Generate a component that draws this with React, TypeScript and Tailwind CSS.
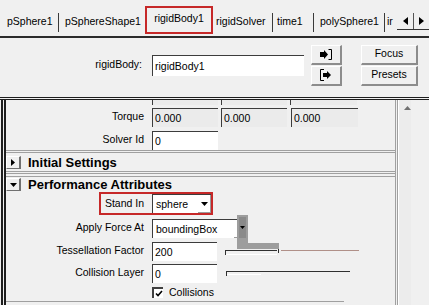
import React from "react";

const Sep = () => <div className="w-px h-[19px] mt-[13px] bg-[#3a3a3a]" />;

function Field({ w, value, gray }: { w: string; value: string; gray?: boolean }) {
  return (
    <div
      className={`${w} h-[19px] border-t border-l border-[#3c3c3c] ${
        gray ? "bg-[#ebebeb]" : "bg-white"
      } pl-[2px] leading-[18px] whitespace-nowrap overflow-hidden`}
    >
      {value}
    </div>
  );
}

function Select({ w, value }: { w: string; value: string }) {
  return (
    <div className={`${w} h-[19px] flex border-t border-l border-[#3c3c3c] bg-white`}>
      <span className="flex-1 pl-[3px] leading-[18px] whitespace-nowrap overflow-hidden">{value}</span>
      <div className="w-[13px] flex items-center justify-center border-b border-r border-[#9a9a9a]">
        <svg width="7" height="4">
          <path d="M0 0h7L3.5 4z" fill="#000" />
        </svg>
      </div>
    </div>
  );
}

function Row({ label, children, h }: { label: string; children: React.ReactNode; h: string }) {
  return (
    <div className={`flex items-center ${h}`}>
      <div className="w-[138px] text-right whitespace-nowrap">{label}</div>
      <div className="ml-[8px] flex items-center">{children}</div>
    </div>
  );
}

function Toggle({ open, label }: { open?: boolean; label: string }) {
  return (
    <div className="flex items-center h-full">
      <div className="w-[15px] h-[13px] flex items-center justify-center border-t border-l border-white border-r-2 border-b border-r-[#707070] border-b-[#707070]">
        {open ? (
          <svg width="7" height="4">
            <path d="M0 0h7L3.5 4z" fill="#000" />
          </svg>
        ) : (
          <svg width="4" height="7">
            <path d="M0 0l4 3.5L0 7z" fill="#000" />
          </svg>
        )}
      </div>
      <span className="ml-[7px] text-[13px] font-bold leading-[15px]">{label}</span>
    </div>
  );
}

const Btn = ({ children }: { children: React.ReactNode }) => (
  <div className="h-[20px] flex items-center justify-center bg-[#f0f0f0] border-t border-l border-white border-r-2 border-b-2 border-r-[#8c8c8c] border-b-[#8c8c8c]">
    {children}
  </div>
);

export default function App() {
  return (
    <div className="relative w-[429px] h-[305px] overflow-hidden bg-[#f0f0f0] text-[10.5px] text-black font-['Liberation_Sans',Arial,sans-serif]">
      {/* tabs */}
      <div className="flex h-[38px] border-b-2 border-[#2b2b2b]">
        <div className="w-[58px] pl-[7px] pt-[14px] leading-[15px]">pSphere1</div>
        <Sep />
        <div className="w-[86px] pl-[6px] pt-[14px] leading-[15px]">pSphereShape1</div>
        <div className="w-[68px] h-[28px] mt-[6px] border-2 border-[#c62828] flex justify-center pt-[3px] leading-[15px]">
          rigidBody1
        </div>
        <div className="w-[59px] pl-[3px] pt-[14px] leading-[15px]">rigidSolver</div>
        <Sep />
        <div className="w-[40px] pl-[4px] pt-[14px] leading-[15px]">time1</div>
        <Sep />
        <div className="w-[70px] pl-[6px] pt-[14px] leading-[15px]">polySphere1</div>
        <Sep />
        <div className="w-[12px] pl-[2px] pt-[14px] leading-[15px] overflow-hidden whitespace-nowrap">ir</div>
        <div className="w-[32px] h-[17px] mt-[13px] flex border-b border-[#333]">
          <div className="w-[16px] flex items-center justify-center">
            <svg width="5" height="8">
              <path d="M5 0v8L0 4z" fill="#000" />
            </svg>
          </div>
          <div className="w-[16px] flex items-center justify-center border-l border-[#555]">
            <svg width="5" height="8">
              <path d="M0 0v8l5-4z" fill="#000" />
            </svg>
          </div>
        </div>
      </div>

      {/* header */}
      <div className="flex items-center h-[59px] pb-[5px]">
        <div className="w-[142px] text-right">rigidBody:</div>
        <div className="ml-[10px] w-[152px] h-[21px] bg-white border-t border-l border-[#3c3c3c] pl-[2px] leading-[20px]">
          rigidBody1
        </div>
        <div className="ml-[7px] w-[31px] flex flex-col gap-px">
          <Btn>
            <svg width="14" height="11">
              <path d="M1 3h4V1l4 4.5L5 10V8H1z" fill="#000" />
              <path d="M9.5 0.5h3v10h-3" stroke="#000" fill="none" />
            </svg>
          </Btn>
          <Btn>
            <svg width="14" height="12">
              <path d="M5 0.5H1.5v11H5" stroke="#000" fill="none" />
              <path d="M4 4h4V2l4 4-4 4V8H4z" fill="#000" />
            </svg>
          </Btn>
        </div>
        <div className="ml-[19px] w-[57px] flex flex-col gap-px">
          <Btn>Focus</Btn>
          <Btn>Presets</Btn>
        </div>
      </div>

      {/* panel */}
      <div className="flex border-t-[3px] border-double border-[#1e1e1e] h-[208px]">
        <div className="w-px" />
        <div className="w-[410px] border-l-[5px] border-double border-[#1e1e1e] flex">
          <div className="w-[405px] border-r-[3px] border-double border-[#a0a0a0] flex flex-col">
            {/* scrolled frame */}
            <div className="h-[53px] border-b-[3px] border-double border-[#a0a0a0]">
              <div className="h-[5px] flex items-end overflow-hidden">
                <div className="ml-[146px] flex gap-[3px]">
                  <Field w="w-[66px]" value="" gray />
                  <Field w="w-[66px]" value="" gray />
                  <Field w="w-[67px]" value="" gray />
                </div>
              </div>
              <div className="mt-[2px]">
                <Row label="Torque" h="h-[20px]">
                  <div className="flex">
                    <Field w="w-[66px]" value="0.000" gray />
                    <div className="ml-[3px]">
                      <Field w="w-[66px]" value="0.000" gray />
                    </div>
                    <div className="ml-[4px]">
                      <Field w="w-[67px]" value="0.000" gray />
                    </div>
                  </div>
                </Row>
              </div>
              <div className="mt-[3px]">
                <Row label="Solver Id" h="h-[20px]">
                  <Field w="w-[66px]" value="0" />
                </Row>
              </div>
            </div>

            {/* initial settings */}
            <div className="h-[21px] border-b-[3px] border-double border-[#a0a0a0]">
              <Toggle label="Initial Settings" />
            </div>

            {/* performance */}
            <div className="mt-[2px] border-t border-[#a0a0a0] flex flex-col">
              <div className="h-[15px]">
                <Toggle open label="Performance Attributes" />
              </div>
              <div className="h-[23px] flex">
                <div className="ml-[93px] w-[114px] h-[23px] border-2 border-[#c62828] flex items-center">
                  <div className="w-[43px] text-right">Stand In</div>
                  <div className="ml-[8px]">
                    <Select w="w-[59px]" value="sphere" />
                  </div>
                </div>
              </div>
              <div className="mt-px">
                <Row label="Apply Force At" h="h-[24px]">
                  <Select w="w-[95px]" value="boundingBox" />
                </Row>
              </div>
              <Row label="Tessellation Factor" h="h-[22px]">
                <Field w="w-[65px]" value="200" />
                <svg width="135" height="9" className="ml-[8px]">
                  <path d="M0 3.5H52" stroke="#303030" />
                  <path d="M0.5 3v5" stroke="#303030" />
                  <path d="M1 7.5H52" stroke="#ffffff" />
                  <path d="M53.5 0v6" stroke="#303030" />
                  <path d="M56 3.5H134" stroke="#b09088" />
                </svg>
              </Row>
              <Row label="Collision Layer" h="h-[22px]">
                <Field w="w-[65px]" value="0" />
                <svg width="125" height="9" className="ml-[9px]">
                  <path d="M0 2.5H124" stroke="#303030" />
                  <path d="M0.5 2v5" stroke="#303030" />
                  <path d="M1 5.5H35" stroke="#ffffff" />
                </svg>
              </Row>
              <div className="h-[17px] flex items-center">
                <div className="ml-[146px] w-[11px] h-[11px] bg-white border-t-2 border-l-2 border-[#404040] flex items-center justify-center">
                  <svg width="8" height="7">
                    <path d="M1 3.5l2 2L7 1" stroke="#000" strokeWidth="1.6" fill="none" />
                  </svg>
                </div>
                <span className="ml-[6px]">Collisions</span>
              </div>
              <div className="w-[338px] h-px bg-[#a0a0a0]" />
            </div>
          </div>
          <div className="flex-1 bg-[#ececec] border-l border-white">
            <svg width="7" height="4" className="ml-[5px] mt-[6px]">
              <path d="M0 4h7L3.5 0z" fill="#707070" />
            </svg>
          </div>
        </div>
      </div>

      {/* drag shadow over the Apply Force At arrow */}
      <div className="absolute left-[237px] top-[215px] w-[11px] h-[34px] bg-[#9d9d9d]" />
      <div className="absolute left-[237px] top-[243px] w-[42px] h-[6px] bg-[#9d9d9d]" />
      <div className="absolute left-[239px] top-[217px] w-[7px] h-[21px] bg-[#8a8a8a] flex items-center justify-center">
        <svg width="5" height="3">
          <path d="M0 0h5L2.5 3z" fill="#000" />
        </svg>
      </div>
    </div>
  );
}
